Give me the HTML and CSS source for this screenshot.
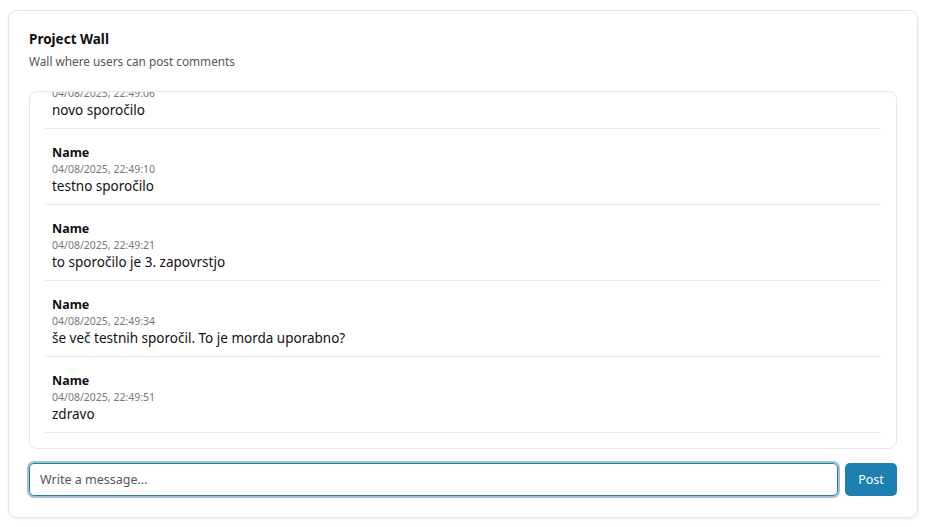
FILE: index.html
```html
<!DOCTYPE html>
<html>
<head>
<meta charset="utf-8">
<link rel="stylesheet" href="styles.css">
</head>
<body>
<div class="card">
  <div class="header">
    <div class="title">Project Wall</div>
    <div class="subtitle">Wall where users can post comments</div>
  </div>
  <div class="list" id="list">
    <div class="item">
      <div class="name">Name</div>
      <div class="date">04/08/2025, 22:49:06</div>
      <div class="msg">novo sporočilo</div>
    </div>
    <div class="item">
      <div class="name">Name</div>
      <div class="date">04/08/2025, 22:49:10</div>
      <div class="msg">testno sporočilo</div>
    </div>
    <div class="item">
      <div class="name">Name</div>
      <div class="date">04/08/2025, 22:49:21</div>
      <div class="msg">to sporočilo je 3. zapovrstjo</div>
    </div>
    <div class="item">
      <div class="name">Name</div>
      <div class="date">04/08/2025, 22:49:34</div>
      <div class="msg">še več testnih sporočil. To je morda uporabno?</div>
    </div>
    <div class="item">
      <div class="name">Name</div>
      <div class="date">04/08/2025, 22:49:51</div>
      <div class="msg">zdravo</div>
    </div>
  </div>
  <div class="composer">
    <input class="input" type="text" placeholder="Write a message..." autofocus>
    <button class="post">Post</button>
  </div>
</div>
<script>
  var l = document.getElementById('list');
  l.scrollTop = l.scrollHeight;
</script>
</body>
</html>
```
FILE: styles.css
```css
html, body { height: 100%; }
body {
  margin: 0;
  padding: 10px 7px 9px 8px;
  box-sizing: border-box;
  background: #fff;
  font-family: "Noto Sans", "Open Sans", sans-serif;
  color: #111;
}
.card {
  height: 100%;
  box-sizing: border-box;
  border: 1px solid #e3e3e3;
  border-radius: 9px;
  box-shadow: 0 1px 3px rgba(0,0,0,0.08);
  padding: 20px 20px 21px 20px;
  display: flex;
  flex-direction: column;
}
.header { margin-bottom: 21px; }
.title {
  font-size: 13.5px;
  font-weight: 700;
  line-height: 17px;
  color: #111;
}
.subtitle {
  margin-top: 5px;
  font-size: 11.8px;
  line-height: 17px;
  color: #555;
}
.list {
  flex: 1;
  min-height: 0;
  overflow-y: auto;
  scrollbar-width: none;
  border: 1px solid #e6e8eb;
  border-radius: 8px;
  padding: 0 15px 15px 15px;
}
.list::-webkit-scrollbar { display: none; }
.item {
  padding: 15px 7px 8px;
  border-bottom: 1px solid #e6e8eb;
}
.name {
  font-size: 12.5px;
  font-weight: 700;
  line-height: 18px;
  color: #111;
}
.date {
  font-size: 10.5px;
  line-height: 14px;
  color: #777;
}
.msg {
  font-size: 13.5px;
  line-height: 20px;
  color: #111;
}
.composer {
  margin-top: 14px;
  display: flex;
  gap: 7px;
  height: 33px;
}
.input {
  flex: 1;
  box-sizing: border-box;
  height: 33px;
  border: 1.5px solid #2b7aa3;
  border-radius: 5px;
  outline: 2px solid rgba(43,122,163,0.45);
  outline-offset: 0;
  padding: 0 10px;
  font-family: inherit;
  font-size: 12.5px;
  color: #111;
}
.input::placeholder { color: #555; }
.post {
  width: 52px;
  height: 33px;
  border: none;
  border-radius: 5px;
  background: #1d80b0;
  color: #fff;
  font-family: inherit;
  font-size: 12.5px;
  padding: 0;
}
```
